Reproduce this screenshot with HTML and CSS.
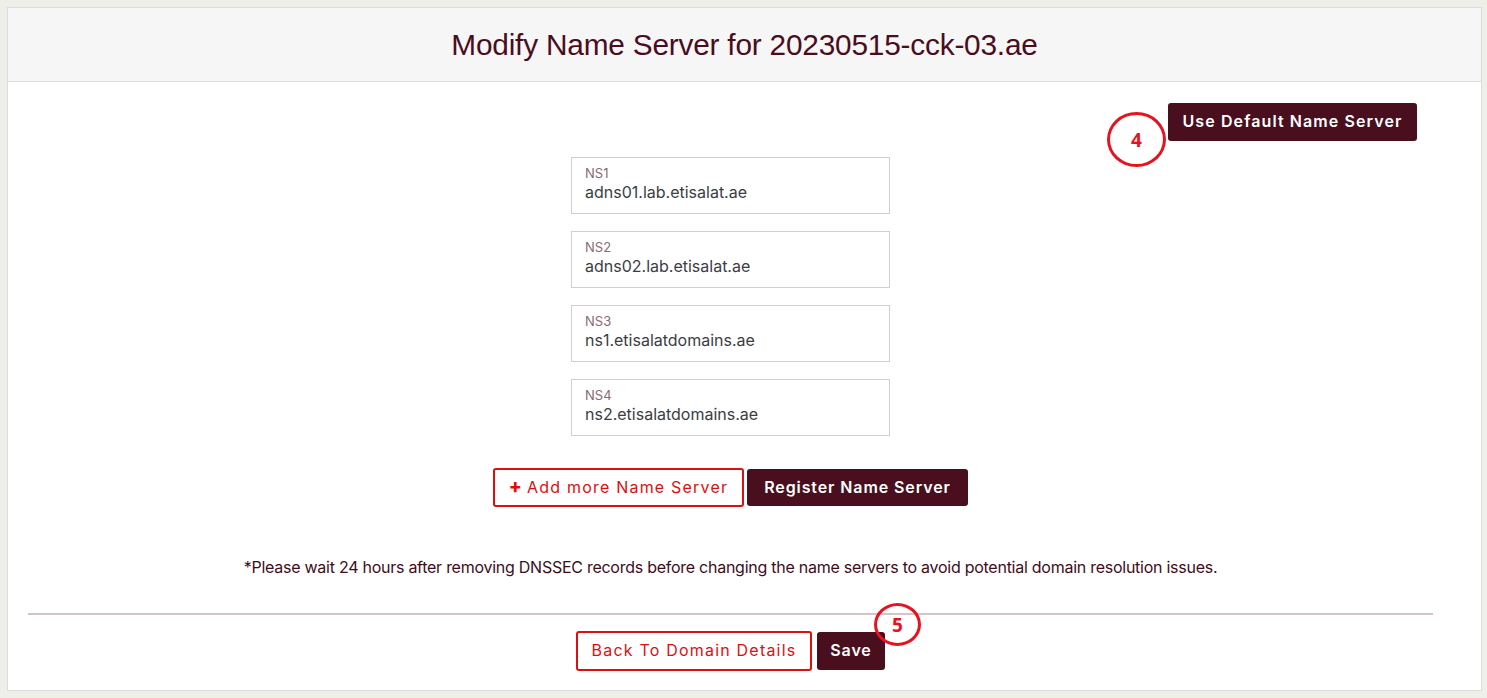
FILE: index.html
```html
<!DOCTYPE html>
<html>
<head>
<meta charset="utf-8">
<link rel="stylesheet" href="styles.css">
</head>
<body>
<div class="card">
  <div class="card-header">
    <h1 class="title">Modify Name Server for 20230515-cck-03.ae</h1>
  </div>
  <div class="card-body">
    <div class="top-row">
      <button class="btn btn-dark btn-default">Use Default Name Server</button>
      <span class="marker marker-4">4</span>
    </div>
    <div class="fields">
      <div class="field"><span class="field-label">NS1</span><span class="field-value">adns01.lab.etisalat.ae</span></div>
      <div class="field"><span class="field-label">NS2</span><span class="field-value">adns02.lab.etisalat.ae</span></div>
      <div class="field"><span class="field-label">NS3</span><span class="field-value">ns1.etisalatdomains.ae</span></div>
      <div class="field"><span class="field-label">NS4</span><span class="field-value">ns2.etisalatdomains.ae</span></div>
    </div>
    <div class="actions">
      <button class="btn btn-outline btn-add"><span class="plus">+</span> Add more Name Server</button>
      <button class="btn btn-dark btn-register">Register Name Server</button>
    </div>
    <p class="notice">*Please wait 24 hours after removing DNSSEC records before changing the name servers to avoid potential domain resolution issues.</p>
    <hr class="divider">
    <div class="footer-actions">
      <button class="btn btn-outline btn-back">Back To Domain Details</button>
      <button class="btn btn-dark btn-save">Save</button>
      <span class="marker marker-5">5</span>
    </div>
  </div>
</div>
</body>
</html>
```
FILE: styles.css
```css
* { box-sizing: border-box; }
html, body { margin: 0; }
body {
  background: #efefea;
  padding: 7px 5px 7px 7px;
  font-family: Inter, "Liberation Sans", sans-serif;
  height: 698px;
}
.card {
  background: #fff;
  border: 1px solid #dcdcdc;
  height: 684px;
  display: flex;
  flex-direction: column;
}
.card-header {
  background: #f6f6f6;
  border-bottom: 1px solid #dcdcdc;
  height: 74px;
  display: flex;
  align-items: center;
  justify-content: center;
}
.title {
  margin: 0;
  font-family: "Liberation Sans", Arial, sans-serif;
  font-weight: 400;
  font-size: 29.8px;
  color: #4a0d1e;
  letter-spacing: -0.2px;
}
.card-body {
  padding: 21px 28px 0 0;
  display: flex;
  flex-direction: column;
  align-items: center;
}
.top-row {
  align-self: stretch;
  display: flex;
  justify-content: flex-end;
  padding-right: 36px;
  position: relative;
}
.btn {
  font-family: Inter, "Liberation Sans", sans-serif;
  font-size: 16px;
  border-radius: 3px;
  display: inline-flex;
  align-items: center;
  justify-content: center;
  cursor: pointer;
  padding: 0;
}
.btn-dark {
  background: #4a0f1e;
  color: #fff;
  border: none;
  font-weight: 600;
  letter-spacing: 0.9px;
}
.btn-outline {
  background: #fff;
  color: #e00e0e;
  border: 2px solid #e00e0e;
  font-weight: 400;
  letter-spacing: 1.2px;
}
.btn-default { width: 249px; height: 38px; letter-spacing: 1.1px; padding-bottom: 3px; }
.marker {
  position: absolute;
  border: 3px solid #e8121e;
  border-radius: 50%;
  color: #e8121e;
  font-family: "Open Sans", "Liberation Sans", sans-serif;
  font-weight: 700;
  font-size: 19px;
  display: flex;
  align-items: center;
  justify-content: center;
  background: transparent;
}
.marker-4 {
  width: 59px;
  height: 55px;
  right: 287px;
  top: 9px;
}
.fields {
  margin-top: 16px;
  display: flex;
  flex-direction: column;
  gap: 17px;
}
.field {
  width: 319px;
  height: 57px;
  border: 1px solid #ccd0d6;
  padding: 6px 13px 0;
  display: flex;
  flex-direction: column;
}
.field-label {
  font-size: 13px;
  color: #8a6a74;
  line-height: 16px;
  margin-top: 1px;
}
.field-value {
  font-size: 16px;
  color: #3c3c44;
  line-height: 22px;
}
.actions {
  margin-top: 32px;
  display: flex;
  align-items: center;
  gap: 3px;
}
.btn-add { width: 251px; height: 39px; padding-bottom: 2px; }
.plus { font-weight: 800; margin-right: 4px; font-size: 19px; }
.btn-register { width: 221px; height: 37px; padding-bottom: 2px; }
.notice {
  margin: 50px 0 0;
  font-size: 16px;
  line-height: 20px;
  color: #3e0d1c;
  letter-spacing: -0.26px;
}
.divider {
  align-self: stretch;
  margin: 36px 20px 0 20px;
  border: none;
  height: 2px;
  background: #d5c3ca;
}
.footer-actions {
  margin-top: 16px;
  display: flex;
  align-items: center;
  gap: 5px;
  position: relative;
}
.btn-back { width: 236px; height: 40px; padding-bottom: 2px; }
.btn-save { width: 68px; height: 38px; padding-bottom: 2px; }
.marker-5 {
  width: 47px;
  height: 43px;
  right: -36px;
  top: -28px;
}
```
